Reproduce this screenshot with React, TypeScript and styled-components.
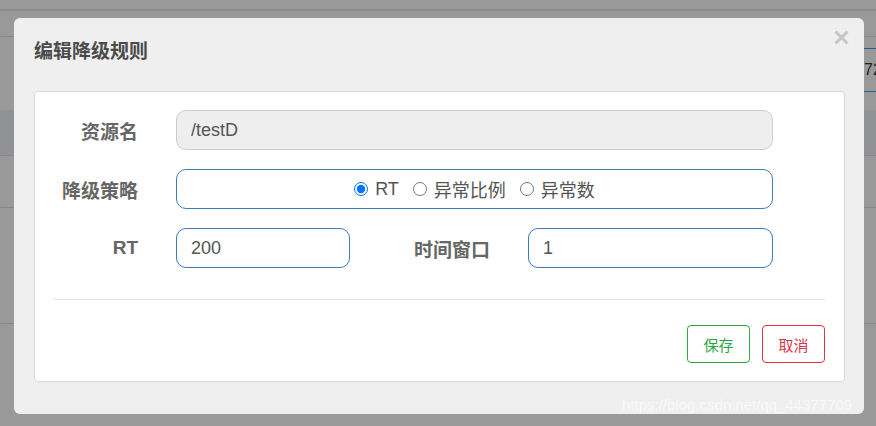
import React, { FC } from "react"
import styled, { createGlobalStyle } from "styled-components"

const GlobalStyle = createGlobalStyle`
  html, body {
    margin: 0;
    padding: 0;
    height: 100%;
  }
  body {
    background: #999;
    font-family: "Liberation Sans", "Noto Sans CJK SC", sans-serif;
    overflow: hidden;
  }
`

// dimmed page behind the dialog
const Page = styled.div`
  height: 426px;
  display: flex;
  flex-direction: column;
  overflow: hidden;
`
const TopStrip = styled.div`
  height: 9px;
  border-bottom: 2px solid #8c8c8c;
`
const BgRow = styled.div<{ $h: number; $shade?: boolean; $line?: boolean }>`
  height: ${(p) => p.$h}px;
  flex-shrink: 0;
  background: ${(p) => (p.$shade ? "#909296" : "transparent")};
  border-bottom: ${(p) => (p.$line ? "1px solid #878787" : "none")};
  display: flex;
  align-items: flex-start;
  padding-left: 864px;
`
const BgInput = styled.div`
  margin-top: 11px;
  width: 60px;
  height: 42px;
  border-top: 1px solid #2b5c8a;
  border-bottom: 1px solid #2b5c8a;
  font-size: 16px;
  line-height: 42px;
  color: #222;
`

const Overlay = styled.div`
  position: fixed;
  inset: 0;
`
const Modal = styled.div`
  margin: 18px 0 0 14px;
  width: 850px;
  height: 396px;
  background: #efefef;
  border-radius: 6px;
  display: flex;
  flex-direction: column;
`
const Header = styled.div`
  display: flex;
  justify-content: space-between;
  align-items: flex-start;
  padding: 20px 15px 0 20px;
  height: 53px;
`
const Title = styled.h4`
  margin: 0;
  font-family: "Noto Sans CJK SC", sans-serif;
  font-size: 19px;
  line-height: 24px;
  font-weight: bold;
  color: #4a4a4a;
`
const Close = styled.button`
  margin-top: -8px;
  padding: 0;
  border: 0;
  background: none;
  width: 15px;
  height: 15px;
  display: flex;
  cursor: pointer;
`
const Card = styled.div`
  margin: 0 19px 0 20px;
  background: #fff;
  border: 1px solid #dadada;
  border-radius: 4px;
  padding: 18px 19px 18px 18px;
`
const Form = styled.div`
  display: flex;
  flex-direction: column;
  gap: 19px;
`
const Row = styled.div`
  display: flex;
  align-items: center;
  height: 40px;
`
const Label = styled.label<{ $w: number }>`
  width: ${(p) => p.$w}px;
  margin-right: 38px;
  text-align: right;
  font-family: "Liberation Sans", "Noto Sans CJK SC", sans-serif;
  font-size: 19px;
  font-weight: bold;
  color: #666;
`
const Field = styled.input<{ $w: number; $disabled?: boolean }>`
  box-sizing: border-box;
  width: ${(p) => p.$w}px;
  height: 40px;
  padding: 0 14px;
  border: 1px solid ${(p) => (p.$disabled ? "#cdcdcd" : "#3a7cbd")};
  border-radius: 10px;
  background: ${(p) => (p.$disabled ? "#eee" : "#fff")};
  font-family: "Liberation Sans", sans-serif;
  font-size: 18px;
  color: #555;
  outline: none;
`
const RadioBox = styled.div`
  box-sizing: border-box;
  width: 597px;
  height: 40px;
  border: 1px solid #3a7cbd;
  border-radius: 10px;
  display: flex;
  justify-content: center;
  align-items: center;
  gap: 14px;
`
const Option = styled.label`
  display: flex;
  align-items: center;
  gap: 7px;
  font-family: "Liberation Sans", "Noto Sans CJK SC", sans-serif;
  font-size: 18px;
  color: #555;
`
const Radio = styled.input`
  margin: 0;
  width: 14px;
  height: 14px;
`
const Divider = styled.div`
  margin-top: 31px;
  height: 1px;
  background: #e5e5e5;
`
const Footer = styled.div`
  margin-top: 25px;
  display: flex;
  justify-content: flex-end;
  gap: 12px;
`
const Button = styled.button<{ $color: string }>`
  width: 63px;
  height: 38px;
  background: #fff;
  border: 1px solid ${(p) => p.$color};
  border-radius: 4px;
  color: ${(p) => p.$color};
  font-family: "Noto Sans CJK SC", sans-serif;
  font-size: 15px;
  cursor: pointer;
`
const Watermark = styled.div`
  position: fixed;
  left: 622px;
  top: 396px;
  font-family: "Liberation Sans", sans-serif;
  font-size: 15px;
  color: rgba(255, 255, 255, 0.6);
  white-space: nowrap;
`

const App: FC = () => {
  return (
    <>
      <GlobalStyle />
      <Page>
        <TopStrip />
        <BgRow $h={25} $line />
        <BgRow $h={73}>
          <BgInput>72</BgInput>
        </BgRow>
        <BgRow $h={45} $shade $line />
        <BgRow $h={51} $line />
        <BgRow $h={115} $line />
      </Page>
      <Overlay>
        <Modal>
          <Header>
            <Title>编辑降级规则</Title>
            <Close aria-label="close">
              <svg width="15" height="15" viewBox="0 0 15 15">
                <path d="M1.5 1.5 L13.5 13.5 M13.5 1.5 L1.5 13.5" stroke="#c6c6c6" strokeWidth="3" />
              </svg>
            </Close>
          </Header>
          <Card>
            <Form>
              <Row>
                <Label $w={85}>资源名</Label>
                <Field $w={597} $disabled readOnly defaultValue="/testD" />
              </Row>
              <Row>
                <Label $w={85}>降级策略</Label>
                <RadioBox>
                  <Option>
                    <Radio type="radio" name="grade" defaultChecked />
                    RT
                  </Option>
                  <Option>
                    <Radio type="radio" name="grade" />
                    异常比例
                  </Option>
                  <Option>
                    <Radio type="radio" name="grade" />
                    异常数
                  </Option>
                </RadioBox>
              </Row>
              <Row>
                <Label $w={85}>RT</Label>
                <Field $w={174} defaultValue="200" />
                <Label $w={140}>时间窗口</Label>
                <Field $w={245} defaultValue="1" />
              </Row>
            </Form>
            <Divider />
            <Footer>
              <Button $color="#28a745">保存</Button>
              <Button $color="#dc3545">取消</Button>
            </Footer>
          </Card>
        </Modal>
      </Overlay>
      <Watermark>https://blog.csdn.net/qq_44377709</Watermark>
    </>
  )
}

export default App
